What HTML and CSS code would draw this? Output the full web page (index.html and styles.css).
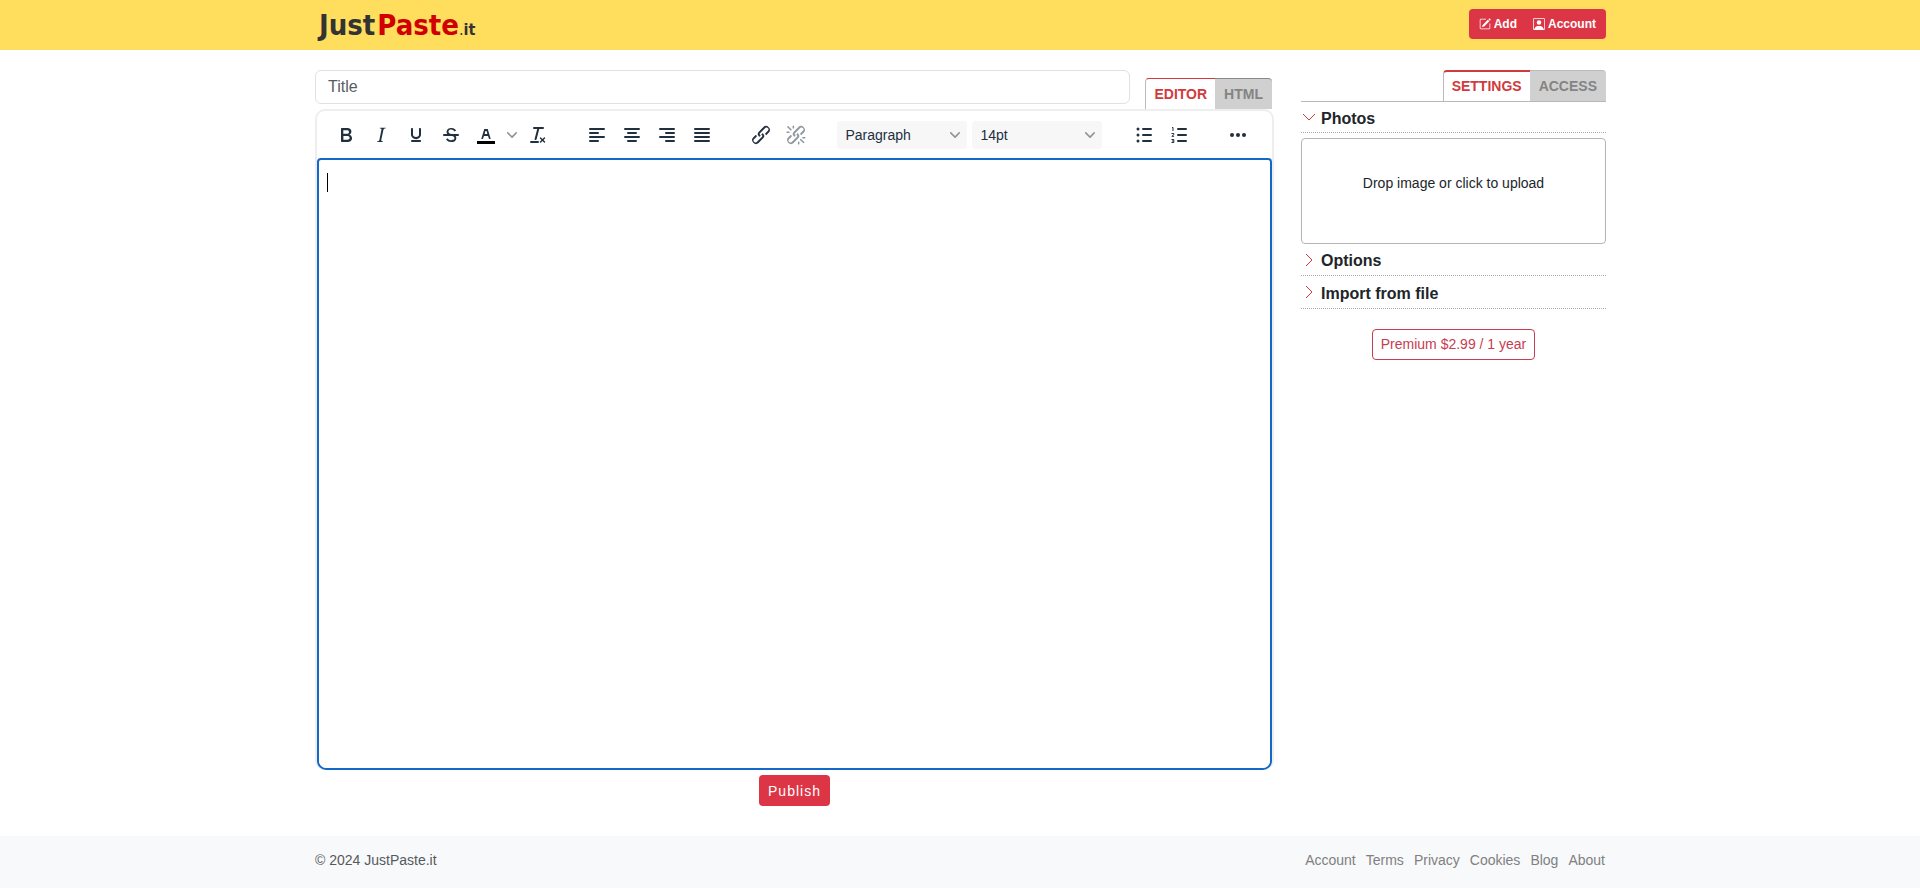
FILE: index.html
```html
<!DOCTYPE html>
<html lang="en">
<head>
<meta charset="utf-8">
<meta name="viewport" content="width=device-width, initial-scale=1">
<title>JustPaste.it</title>
<link rel="stylesheet" href="styles.css">
</head>
<body>
<header class="topbar">
  <div class="container topbar-row">
    <a class="logo" href="#"><span class="logo-just">Just</span><span class="logo-paste">Paste</span><span class="logo-it"><span class="logo-dot">.</span>it</span></a>
    <nav class="actions">
      <a class="action" href="#"><svg width="12" height="12" viewBox="0 0 16 16" fill="currentColor"><path d="M15.5 1.94a.5.5 0 0 1 0 .7l-1.04 1.05-2-2L13.5.65a.5.5 0 0 1 .7 0l1.3 1.29zm-1.75 2.45-2-2L4.94 9.21a.5.5 0 0 0-.12.2l-.8 2.41a.25.25 0 0 0 .31.32l2.41-.8a.5.5 0 0 0 .2-.13l6.81-6.82z"/><path d="M1 13.5A1.5 1.5 0 0 0 2.5 15h11a1.5 1.5 0 0 0 1.5-1.5v-6a.5.5 0 0 0-1 0v6a.5.5 0 0 1-.5.5h-11a.5.5 0 0 1-.5-.5v-11a.5.5 0 0 1 .5-.5H9a.5.5 0 0 0 0-1H2.500A1.500 1.500 0 0 0 1 2.500v11z"/></svg>Add</a>
      <a class="action" href="#"><svg width="12" height="12" viewBox="0 0 16 16" fill="currentColor"><path d="M11 6a3 3 0 1 1-6 0 3 3 0 0 1 6 0z"/><path d="M2 0a2 2 0 0 0-2 2v12a2 2 0 0 0 2 2h12a2 2 0 0 0 2-2V2a2 2 0 0 0-2-2H2zm12 1a1 1 0 0 1 1 1v12a1 1 0 0 1-1 1c0-1-1-4-6-4s-6 3-6 4a1 1 0 0 1-1-1V2a1 1 0 0 1 1-1h12z"/><path d="M2 15c0-1 1-4.500 6-4.500s6 3.500 6 4.500z"/></svg>Account</a>
    </nav>
  </div>
</header>

<main class="container layout">
  <section class="main-col">
    <div class="title-row">
      <input class="title-input" type="text" placeholder="Title" aria-label="Title">
      <div class="tabs">
        <button class="tab tab-active" type="button">EDITOR</button>
        <button class="tab" type="button">HTML</button>
      </div>
    </div>
    <div class="editor">
      <div class="toolbar">
        <div class="group">
          <button class="tool" type="button" aria-label="Bold"><svg class="icon" viewBox="0 0 24 24"><path fill-rule="evenodd" d="M7.800 19c-.3 0-.5 0-.6-.2l-.2-.5V5.700c0-.2 0-.4.2-.5l.6-.2h5c1.500 0 2.700.3 3.500 1 .7.6 1.100 1.400 1.100 2.500a3 3 0 0 1-.6 1.900c-.4.6-1 1-1.600 1.200.4.1.9.3 1.300.6s.8.7 1 1.200c.4.4.5 1 .5 1.600 0 1.300-.4 2.300-1.300 3-.8.7-2.100 1-3.800 1H7.800Zm5-8.300c.6 0 1.200-.1 1.600-.5.4-.3.6-.7.6-1.300 0-1.100-.8-1.700-2.300-1.700H9.300v3.500h3.400Zm.5 6c.7 0 1.300-.1 1.700-.4.4-.4.6-.9.6-1.500s-.2-1-.7-1.400c-.4-.3-1-.4-2-.4H9.400v3.800h4Z"/></svg></button>
          <button class="tool" type="button" aria-label="Italic"><svg class="icon" viewBox="0 0 24 24"><path d="m16.700 4.700-.1.900h-.3c-.6 0-1 0-1.400.3-.3.3-.4.6-.5 1.100l-2.100 9.800v.6c0 .5.4.8 1.400.8h.2l-.2.800H8l.2-.800h.2c1.100 0 1.800-.5 2-1.500l2-9.800.1-.5c0-.6-.4-.8-1.400-.8h-.3l.2-.9h5.800Z"/></svg></button>
          <button class="tool" type="button" aria-label="Underline"><svg class="icon" viewBox="0 0 24 24"><path d="M16 5c.6 0 1 .4 1 1v5.500a4 4 0 0 1-.4 1.800l-1 1.400a5.300 5.300 0 0 1-5.500 1 5 5 0 0 1-1.600-1c-.5-.4-.8-.9-1.100-1.400a4 4 0 0 1-.4-1.800V6c0-.6.4-1 1-1s1 .4 1 1v5.500c0 .3 0 .6.2 1l.6.7a3.300 3.300 0 0 0 2.200.8 3.400 3.400 0 0 0 2.200-.8c.3-.2.4-.5.6-.8l.2-.9V6c0-.6.4-1 1-1ZM8 17h8c.6 0 1 .4 1 1s-.4 1-1 1H8a1 1 0 0 1 0-2Z"/></svg></button>
          <button class="tool" type="button" aria-label="Strikethrough"><svg class="icon" viewBox="0 0 24 24"><path d="M15.600 8.500c-.5-.7-1-1.100-1.300-1.300-.6-.4-1.300-.6-2-.6-2.700 0-2.800 1.700-2.800 2.100 0 1.600 1.800 2 3.200 2.300 4.400.9 4.600 2.800 4.600 3.900 0 1.400-.7 4.100-5 4.100A6.200 6.200 0 0 1 7 16.400l1.500-1.100c.4.6 1.600 2 3.700 2 1.600 0 2.500-.4 3-1.200.4-.8.3-2-.8-2.600-.7-.4-1.600-.7-2.900-1-1-.2-3.900-.8-3.900-3.600C7.600 6 10.300 5 12.400 5c2.900 0 4.200 1.600 4.700 2.400l-1.500 1.100Z"/><path d="M5 11h14a1 1 0 0 1 0 2H5a1 1 0 0 1 0-2Z"/></svg></button>
          <button class="tool" type="button" aria-label="Text color"><svg class="icon" viewBox="0 0 24 24"><path fill="#000" d="M3 18h18v3H3z"/><path fill-rule="evenodd" d="M8.700 16h-.8a.5.5 0 0 1-.5-.6l2.700-9c.1-.3.3-.4.5-.4h2.800c.2 0 .4.1.5.4l2.700 9a.5.5 0 0 1-.5.6h-.8a.5.5 0 0 1-.4-.4l-.7-2.200c0-.3-.3-.4-.5-.4h-3.400c-.2 0-.4.1-.5.4l-.7 2.200c0 .3-.2.4-.4.4Zm2.600-7.600-.6 2a.5.5 0 0 0 .5.6h1.600a.5.5 0 0 0 .5-.6l-.6-2c0-.3-.3-.4-.5-.4h-.4c-.2 0-.4.1-.5.4Z"/></svg></button>
          <button class="tool tool-narrow" type="button" aria-label="Choose text color"><svg class="chevron" viewBox="0 0 10 10"><path d="M8.700 2.200c.3-.3.8-.3 1 0 .4.4.4.9 0 1.200L5.700 7.800c-.3.3-.9.3-1.200 0L.2 3.400a.8.8 0 0 1 0-1.200c.3-.3.8-.3 1.100 0L5 6l3.700-3.800Z"/></svg></button>
          <button class="tool" type="button" aria-label="Clear formatting"><svg class="icon" viewBox="0 0 24 24"><path d="M13.200 6a1 1 0 0 1 0 .2l-2.600 10a1 1 0 0 1-1 .8h-.2a.8.8 0 0 1-.8-1l2.600-10H8a1 1 0 1 1 0-2h9a1 1 0 0 1 0 2h-3.800ZM5 18h7a1 1 0 0 1 0 2H5a1 1 0 0 1 0-2Zm13 1.500L16.500 18 15 19.500a.7.7 0 0 1-1-1l1.500-1.500-1.500-1.500a.7.7 0 0 1 1-1l1.500 1.500 1.500-1.500a.7.7 0 0 1 1 1L17.500 17l1.500 1.500a.7.7 0 0 1-1 1Z"/></svg></button>
        </div>
        <div class="group">
          <button class="tool" type="button" aria-label="Align left"><svg class="icon lines" viewBox="0 0 24 24"><path d="M5 6h14M5 10h8M5 14h14M5 18h8"/></svg></button>
          <button class="tool" type="button" aria-label="Align center"><svg class="icon lines" viewBox="0 0 24 24"><path d="M5 6h14M8 10h8M5 14h14M8 18h8"/></svg></button>
          <button class="tool" type="button" aria-label="Align right"><svg class="icon lines" viewBox="0 0 24 24"><path d="M5 6h14M11 10h8M5 14h14M11 18h8"/></svg></button>
          <button class="tool" type="button" aria-label="Justify"><svg class="icon lines" viewBox="0 0 24 24"><path d="M5 6h14M5 10h14M5 14h14M5 18h14"/></svg></button>
        </div>
        <div class="group">
          <button class="tool" type="button" aria-label="Insert link"><svg class="icon" viewBox="0 0 24 24"><path d="M6.200 12.300a1 1 0 0 1 1.400 1.400l-2 2a2 2 0 1 0 2.600 2.800l4.800-4.800a1 1 0 0 0 0-1.400 1 1 0 1 1 1.400-1.300 2.900 2.900 0 0 1 0 4L9.600 20a3.900 3.900 0 0 1-5.500-5.500l2-2Zm11.600-.6a1 1 0 0 1-1.400-1.400l2-2a2 2 0 1 0-2.600-2.800L11 10.300a1 1 0 0 0 0 1.400A1 1 0 1 1 9.600 13a2.900 2.900 0 0 1 0-4L14.400 4a3.900 3.900 0 0 1 5.500 5.500l-2 2Z"/></svg></button>
          <button class="tool tool-off" type="button" aria-label="Remove link" disabled><svg class="icon" viewBox="0 0 24 24"><path d="M6.200 12.300a1 1 0 0 1 1.400 1.400l-2 2a2 2 0 1 0 2.600 2.800l4.800-4.800a1 1 0 0 0 0-1.400 1 1 0 1 1 1.400-1.300 2.900 2.900 0 0 1 0 4L9.600 20a3.900 3.900 0 0 1-5.500-5.500l2-2Zm11.600-.6a1 1 0 0 1-1.400-1.400l2-2a2 2 0 1 0-2.600-2.800L11 10.300a1 1 0 0 0 0 1.400A1 1 0 1 1 9.600 13a2.900 2.900 0 0 1 0-4L14.400 4a3.900 3.900 0 0 1 5.500 5.500l-2 2ZM7.600 6.300a.8.8 0 0 1-1 1.100L3.300 4.200a.7.7 0 1 1 1-1l3.200 3.100ZM5.100 8.600a.8.8 0 0 1 0 1.500H3a.8.8 0 0 1 0-1.500H5Zm5-3.500a.8.8 0 0 1-1.500 0V3a.8.8 0 0 1 1.500 0V5Zm6 11.800a.8.8 0 0 1 1-1l3.200 3.200a.8.8 0 0 1-1 1L16 17Zm-2.200 2a.8.8 0 0 1 1.500 0V21a.8.8 0 0 1-1.500 0V19Zm5-3.500a.7.7 0 1 1 0-1.500H21a.8.8 0 0 1 0 1.500H19Z"/></svg></button>
        </div>
        <div class="group group-selects">
          <label class="picker"><select aria-label="Block format"><option>Paragraph</option><option>Heading 1</option></select><svg class="chevron" viewBox="0 0 10 10"><path d="M8.700 2.200c.3-.3.8-.3 1 0 .4.4.4.9 0 1.200L5.700 7.800c-.3.3-.9.3-1.200 0L.2 3.400a.8.8 0 0 1 0-1.200c.3-.3.8-.3 1.100 0L5 6l3.700-3.800Z"/></svg></label>
          <label class="picker"><select aria-label="Font size"><option>14pt</option><option>18pt</option></select><svg class="chevron" viewBox="0 0 10 10"><path d="M8.700 2.200c.3-.3.8-.3 1 0 .4.4.4.9 0 1.200L5.700 7.800c-.3.3-.9.3-1.200 0L.2 3.400a.8.8 0 0 1 0-1.200c.3-.3.8-.3 1.100 0L5 6l3.700-3.800Z"/></svg></label>
        </div>
        <div class="group">
          <button class="tool" type="button" aria-label="Bullet list"><svg class="icon lines" viewBox="0 0 24 24"><path d="M11 6h8M11 12h8M11 18h8"/><g class="dots"><circle cx="6" cy="6" r="1.500"/><circle cx="6" cy="12" r="1.500"/><circle cx="6" cy="18" r="1.500"/></g></svg></button>
          <button class="tool" type="button" aria-label="Numbered list"><svg class="icon lines" viewBox="0 0 24 24"><path d="M11 6h8M11 12h8M11 18h8"/><path class="digits" d="M5 4.500h1V8M4.500 10.500h2.300v1.200l-2 1.600h2.300M4.500 16.500h2.300v3H4.500M5 18h1.800"/></svg></button>
        </div>
        <div class="group">
          <button class="tool" type="button" aria-label="More"><svg class="icon" viewBox="0 0 24 24"><circle cx="6" cy="12" r="2"/><circle cx="12" cy="12" r="2"/><circle cx="18" cy="12" r="2"/></svg></button>
        </div>
      </div>
      <div class="writing">
        <textarea class="writing-area" aria-label="Article text"></textarea>
        <span class="caret"></span>
      </div>
    </div>
    <button class="publish" type="button">Publish</button>
  </section>

  <aside class="side-col">
    <div class="side-tabs">
      <button class="tab tab-active" type="button">SETTINGS</button>
      <button class="tab" type="button">ACCESS</button>
    </div>
    <button class="fold" type="button"><svg class="fold-icon" viewBox="0 0 16 16"><path d="m2 5 6 6 6-6"/></svg>Photos</button>
    <button class="dropzone" type="button">Drop image or click to upload</button>
    <button class="fold" type="button"><svg class="fold-icon" viewBox="0 0 16 16"><path d="m5 2 6 6-6 6"/></svg>Options</button>
    <button class="fold" type="button"><svg class="fold-icon" viewBox="0 0 16 16"><path d="m5 2 6 6-6 6"/></svg>Import from file</button>
    <a class="premium" href="#">Premium $2.99 / 1 year</a>
  </aside>
</main>

<footer class="footer">
  <div class="container footer-row">
    <span>© 2024 JustPaste.it</span>
    <nav class="footer-links">
      <a href="#">Account</a><a href="#">Terms</a><a href="#">Privacy</a><a href="#">Cookies</a><a href="#">Blog</a><a href="#">About</a>
    </nav>
  </div>
</footer>
</body>
</html>
```

FILE: styles.css
```css
* {
  box-sizing: border-box;
}

body {
  margin: 0;
  min-height: 100vh;
  display: flex;
  flex-direction: column;
  background: #fff;
  color: #212529;
  font-family: "Liberation Sans", Arial, sans-serif;
  font-size: 14px;
}

button,
input,
select,
textarea {
  font: inherit;
  color: inherit;
  margin: 0;
}

button {
  cursor: pointer;
}

a {
  text-decoration: none;
}

.container {
  width: 100%;
  max-width: 1320px;
  margin: 0 auto;
  padding: 0 14px 0 15px;
}

/* Top bar */
.topbar {
  background: #ffde5e;
}

.topbar-row {
  display: flex;
  align-items: center;
  justify-content: space-between;
  height: 50px;
}

.logo {
  display: flex;
  align-items: baseline;
  padding: 5px 0 0 4px;
  font-family: "DejaVu Sans Condensed", "DejaVu Sans", sans-serif;
  font-stretch: condensed;
  font-weight: bold;
  font-size: 29px;
  line-height: 36px;
  color: #333;
}

.logo-paste {
  margin-left: 2px;
  color: #d00000;
}

.logo-it {
  font-size: 16px;
}

.logo-dot {
  font-weight: normal;
}

.actions {
  display: flex;
  align-self: flex-start;
  gap: 16px;
  margin-top: 9px;
  padding: 0 10px;
  height: 30px;
  border-radius: 4px;
  background: #dc3545;
}

.action {
  display: flex;
  align-items: center;
  gap: 3px;
  color: #fff;
  font-weight: bold;
  font-size: 12px;
}

/* Page columns */
.layout {
  display: flex;
  flex: 1;
  gap: 27px;
  padding-top: 20px;
  padding-bottom: 30px;
}

.main-col {
  flex: 1;
  display: flex;
  flex-direction: column;
}

.side-col {
  display: flex;
  flex-direction: column;
  width: 305px;
}

.title-row {
  display: flex;
  align-items: flex-start;
  gap: 15px;
  padding-right: 2px;
}

.title-input {
  flex: 1;
  height: 34px;
  padding: 0 12px;
  border: 1px solid #dee2e6;
  border-radius: 6px;
  font-size: 16px;
}

.title-input::placeholder {
  color: #595c5f;
  opacity: 1;
}

.tabs {
  display: flex;
  padding-top: 8px;
}

.tab {
  height: 31px;
  padding: 0 9px;
  border: 0;
  border-top: 1px solid #888;
  border-radius: 0 4px 0 0;
  background: #d0d0d0;
  color: #848484;
  font-weight: bold;
}

.tab-active {
  padding: 0 8px;
  border-top-color: #d13a3c;
  border-left: 1px solid #bbb;
  border-radius: 4px 0 0 0;
  background: #fff;
  color: #d13a3c;
}

/* Editor */
.editor {
  flex: 1;
  display: flex;
  flex-direction: column;
  border: 2px solid #eee;
  border-bottom: 0;
  border-radius: 10px;
}

.toolbar {
  display: flex;
  justify-content: space-between;
  align-items: center;
  padding: 3px 17px 3px 12px;
  height: 47px;
}

.group {
  display: flex;
  align-items: center;
  gap: 1px;
}

.group-selects {
  gap: 5px;
}

.tool {
  display: flex;
  align-items: center;
  justify-content: center;
  width: 34px;
  height: 28px;
  padding: 0;
  border: 0;
  background: none;
}

.tool-narrow {
  width: 16px;
}

.tool-off {
  opacity: 0.5;
}

.icon {
  width: 24px;
  height: 24px;
  fill: #222f3e;
}

.lines {
  fill: none;
  stroke: #222f3e;
  stroke-width: 2;
  stroke-linecap: round;
}

.lines .dots {
  fill: #222f3e;
  stroke: none;
}

.lines .digits {
  stroke-width: 1;
  stroke-linecap: butt;
}

.chevron {
  width: 10px;
  height: 10px;
  fill: #909498;
}

.picker {
  display: grid;
  align-items: center;
  width: 130px;
  height: 28px;
  border-radius: 3px;
  background: #f7f7f8;
}

.picker select,
.picker .chevron {
  grid-area: 1 / 1;
}

.picker select {
  appearance: none;
  width: 100%;
  height: 28px;
  padding: 0 24px 0 8px;
  border: 0;
  background: none;
  color: #222f3e;
}

.picker .chevron {
  justify-self: end;
  margin-right: 7px;
  pointer-events: none;
}

.writing {
  position: relative;
  flex: 1;
  display: flex;
  border: 2px solid #1269c8;
  border-radius: 4px 4px 9px 9px;
}

.writing-area {
  flex: 1;
  padding: 12px 8px;
  border: 0;
  border-radius: 8px;
  outline: 0;
  resize: none;
  background: #fff;
  font-size: 19px;
}

.caret {
  position: absolute;
  top: 13px;
  left: 8px;
  width: 1px;
  height: 19px;
  background: #000;
}

.publish {
  align-self: center;
  height: 31px;
  margin-top: 5px;
  padding: 0 9px;
  border: 0;
  border-radius: 4px;
  background: #dc3545;
  color: #fff;
  letter-spacing: 1px;
}

/* Settings column */
.side-tabs {
  display: flex;
  justify-content: flex-end;
  border-bottom: 1px solid #b8b8b8;
}

.side-tabs .tab {
  border-top-color: #bbb;
}

.side-tabs .tab-active {
  padding-bottom: 2px;
  border-top: 2px solid #d13a3c;
}

.fold {
  display: flex;
  align-items: center;
  gap: 4px;
  height: 33px;
  padding: 3px 0 0;
  border: 0;
  border-bottom: 1px dotted #aaa;
  background: none;
  font-weight: bold;
  font-size: 16px;
}

.side-tabs + .fold {
  height: 31px;
}

.fold-icon {
  width: 16px;
  height: 16px;
  margin-bottom: 3px;
  fill: none;
  stroke: #d13a3c;
}

.dropzone {
  height: 106px;
  margin-top: 5px;
  padding: 0 0 17px;
  border: 1px solid #b5b5b5;
  border-radius: 4px;
  background: #fff;
}

.dropzone + .fold {
  height: 32px;
}

.premium {
  align-self: center;
  margin-top: 20px;
  padding: 0 8px;
  border: 1px solid #c73c50;
  border-radius: 4px;
  color: #c73c50;
  line-height: 29px;
}

/* Footer */
.footer {
  background: #f8f9fb;
  color: #55595d;
}

.footer-row {
  display: flex;
  align-items: center;
  justify-content: space-between;
  padding-bottom: 4px;
  height: 52px;
}

.footer-links {
  display: flex;
  gap: 10px;
  padding-right: 1px;
}

.footer-links a {
  color: #808080;
}
```
